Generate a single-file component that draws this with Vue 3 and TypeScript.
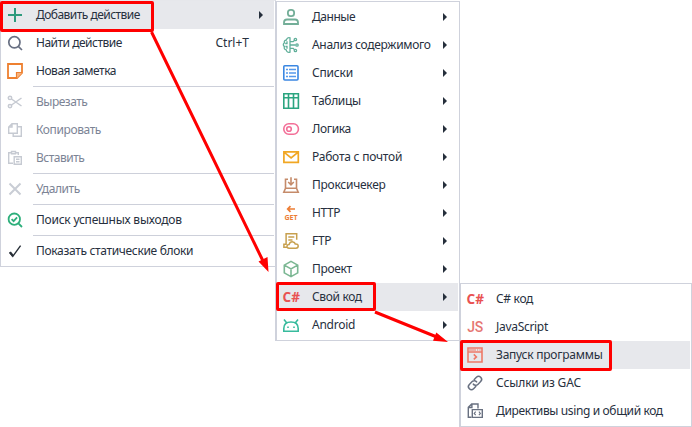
<script setup lang="ts">
interface Item {
  label: string
  icon: string
  tracking: number
  hint?: string
  disabled?: boolean
  active?: boolean
  arrow?: boolean
  divided?: boolean
}
interface Menu {
  name: string
  items: Item[]
}

// Icon bodies on an 18x18 grid
const icons: Record<string, string> = {
  plus: '<path d="M9 2v14M2 9h14" stroke="#2d9b7d" stroke-width="2"/>',
  search: '<g stroke="#687083" stroke-width="1.7"><circle cx="8.4" cy="8.3" r="5.6"/><path d="M12.3 12.4L16 16"/></g>',
  note: '<g stroke="#ee8030" stroke-width="1.8"><path d="M2 2h14v9l-5 5H2z"/><path d="M10.8 16v-5H16" /></g><path d="M11 11h5l-5 5z" fill="#f6b27d"/>',
  cut: '<g stroke="#c6cad2" stroke-width="1.5"><circle cx="4" cy="4.9" r="1.7"/><circle cx="4" cy="13.1" r="1.7"/><path d="M5.5 6L15.5 13M5.5 12L15.5 5"/></g>',
  copy: '<g stroke="#c6cad2" stroke-width="1.4"><path d="M6 2.7h5.3v9.6H2.7V6L6 2.7zM6 2.7V6H2.7"/><path d="M11.3 5.7h4v9.6H7.2v-3"/></g>',
  paste: '<g stroke="#c6cad2" stroke-width="1.4"><path d="M7 14.3H2.7V3.7H5M10 3.7h2.3V6M5.5 2.5h4v2.3h-4z"/><path d="M8.2 7.7h7.1v7.6H8.2zM10 10.2h3.5M10 12.8h3.5"/></g>',
  remove: '<path d="M3.5 3.5l11 11M14.5 3.5l-11 11" stroke="#c9cdd5" stroke-width="2"/>',
  found: '<g stroke="#2daf7b" stroke-width="1.8"><circle cx="8.3" cy="8.2" r="5.7"/><path d="M12.4 12.4L16 16M5.6 8.1l2 2 3.5-3.7"/></g>',
  check: '<path d="M3.6 10.2l3.2 4.1L14.6 3.6" stroke="#282f38" stroke-width="1.4"/><path d="M4 10.2l3 3.8" stroke="#282f38" stroke-width="2.2"/>',
  person: '<g stroke="#73ae98" stroke-width="1.8"><rect x="5.9" y="1.8" width="6.2" height="6.4" rx="2.7"/><path d="M2 16v-1.5q0-3 3-3h8q3 0 3 3V16z"/></g>',
  brain: '<g stroke="#60af9a" stroke-width="1.3"><path d="M8 1.8v14.4Q5 17 4.2 13.8Q1.6 13.2 2.4 10.6Q.2 9 2.4 6.8Q1.8 4.4 4.4 4Q5.2 1 8 1.8zM5 5.3v2.2H3.2M5 12.7v-2.2H3.4M8 5.6h3.2l1.2-1.2M8 9h5.4M8 12.4h3.2l1.2 1.2"/><circle cx="13.4" cy="3.5" r="1.2"/><circle cx="15" cy="9" r="1.2"/><circle cx="13.4" cy="14.5" r="1.2"/></g>',
  list: '<rect x="1.8" y="1.8" width="14.2" height="14.2" rx="1" stroke="#3b87e2" stroke-width="1.6"/><path d="M4 5.5h2M4 9h2M4 12.5h2M7 5.5h7M7 9h7M7 12.5h7" stroke="#5599ec" stroke-width="1.3"/>',
  table: '<path d="M1.8 1.8h14.6v14.4H1.8zM1.8 5.8h14.6M6.5 2v14M11.5 2v14" stroke="#2ba580" stroke-width="1.6"/>',
  toggle: '<g stroke="#f36f98" stroke-width="1.6"><rect x="1.8" y="3.8" width="14.6" height="10.4" rx="5"/><circle cx="7" cy="9" r="2.3"/></g>',
  mail: '<path d="M1.9 3.8h14.4v10.6H1.9zM2.3 4.3L9.1 10l6.8-5.7" stroke="#f1a723" stroke-width="1.7"/>',
  proxy: '<g stroke="#c58b6a" stroke-width="1.6"><path d="M6 3.3H3.5v8.9h11V3.3H12M3.5 12.2l-1.7 4h14.4l-1.7-4M9 1.2v7.4M6.2 6L9 8.8 11.8 6"/></g>',
  get: '<path d="M13 5H6M8.5 2.2L5.7 5l2.8 2.8" stroke="#ed7e35" stroke-width="1.7"/><text class="glyph get" x="9" y="16.2">GET</text>',
  ftp: '<g stroke="#c7a04e" stroke-width="1.5"><path d="M5 15.3H1.9v-3h2.2V1.8h10.6v6M6.3 5h6M6.3 8h4.2"/><path d="M7.1 16.2q-2.6-.3-2-2.5.4-1.3 2-1.2 1-3 3.8-2.6 2 .3 2.3 2.1 3-.2 3 2.1 0 2.1-2.3 2.1z"/></g>',
  cube: '<path d="M9 1.4l6.7 3.7v7.8L9 16.6l-6.7-3.7V5.1zM2.3 5.1L9 8.9l6.7-3.8M9 8.9v7.7" stroke="#7bb793" stroke-width="1.6"/>',
  csharp: '<text class="glyph sharp" x="9.2" y="13.8">C#</text>',
  js: '<text class="glyph js" x="9" y="14.2">JS</text>',
  android: '<path d="M1.8 15.2V12.5q0-6.5 7.2-6.5t7.2 6.5v2.7zM4.8 7L2 3.5M13.2 7L16 3.5" stroke="#38bb9d" stroke-width="1.6"/><path d="M5.2 10.5h1.6v1.6H5.2zM11.2 10.5h1.6v1.6h-1.6z" fill="#38bb9d"/>',
  run: '<path d="M2 2h14v14H2zM2 6h14M7.8 8.4l2.6 2.5-2.6 2.5" stroke="#ee7867" stroke-width="1.6"/><path d="M3 4h7M11 4h1.2M13.4 4h1.2" stroke="#ee7867" stroke-width="1"/>',
  link: '<g stroke="#687080" stroke-width="1.5" transform="rotate(-45 9 9)"><path d="M7.7 12H4a3 3 0 0 1 0-6h4a3 3 0 0 1 2.8 4M10.3 6H14a3 3 0 0 1 0 6h-4a3 3 0 0 1-2.8-4"/></g>',
  directive: '<g stroke="#687080" stroke-width="1.4"><path d="M5.5 15.3H2.3V5.4L5.7 2H12v4.5M5.9 2v3.5H2.3"/><path d="M6.3 7.6h10v7.8h-10z"/><path d="M9.7 9.7L8.2 11.4l1.5 1.7M12.9 9.7l1.5 1.7-1.5 1.7" stroke-width="1.1"/></g>',
}

const menus: Menu[] = [
  {
    name: 'main',
    items: [
      { label: 'Добавить действие', icon: 'plus', tracking: -0.53, active: true, arrow: true },
      { label: 'Найти действие', icon: 'search', tracking: -0.5, hint: 'Ctrl+T' },
      { label: 'Новая заметка', icon: 'note', tracking: -0.47 },
      { label: 'Вырезать', icon: 'cut', tracking: -0.5, disabled: true, divided: true },
      { label: 'Копировать', icon: 'copy', tracking: -0.4, disabled: true },
      { label: 'Вставить', icon: 'paste', tracking: -0.5, disabled: true },
      { label: 'Удалить', icon: 'remove', tracking: -0.42, disabled: true, divided: true },
      { label: 'Поиск успешных выходов', icon: 'found', tracking: -0.23, divided: true },
      { label: 'Показать статические блоки', icon: 'check', tracking: -0.33, divided: true },
    ],
  },
  {
    name: 'actions',
    items: [
      { label: 'Данные', icon: 'person', tracking: -0.45, arrow: true },
      { label: 'Анализ содержимого', icon: 'brain', tracking: -0.3, arrow: true },
      { label: 'Списки', icon: 'list', tracking: -0.2, arrow: true },
      { label: 'Таблицы', icon: 'table', tracking: -0.3, arrow: true },
      { label: 'Логика', icon: 'toggle', tracking: -0.35, arrow: true },
      { label: 'Работа с почтой', icon: 'mail', tracking: -0.23, arrow: true },
      { label: 'Проксичекер', icon: 'proxy', tracking: -0.26, arrow: true },
      { label: 'HTTP', icon: 'get', tracking: -0.4, arrow: true },
      { label: 'FTP', icon: 'ftp', tracking: -0.3, arrow: true },
      { label: 'Проект', icon: 'cube', tracking: -0.35, arrow: true },
      { label: 'Свой код', icon: 'csharp', tracking: -0.35, active: true, arrow: true },
      { label: 'Android', icon: 'android', tracking: -0.25, arrow: true },
    ],
  },
  {
    name: 'code',
    items: [
      { label: 'C# код', icon: 'csharp', tracking: -0.3 },
      { label: 'JavaScript', icon: 'js', tracking: -0.3 },
      { label: 'Запуск программы', icon: 'run', tracking: -0.25, active: true },
      { label: 'Ссылки из GAC', icon: 'link', tracking: -0.15 },
      { label: 'Директивы using и общий код', icon: 'directive', tracking: -0.37 },
    ],
  },
]
</script>

<template>
  <main class="stage">
    <section v-for="menu in menus" :key="menu.name" class="menu" :class="menu.name" role="menu">
      <template v-for="item in menu.items" :key="item.label">
        <div v-if="item.divided" class="divider"></div>
        <div class="row" :class="{ active: item.active, disabled: item.disabled }" role="menuitem">
          <svg class="icon" viewBox="0 0 18 18" v-html="icons[item.icon]"></svg>
          <span class="label" :style="{ letterSpacing: item.tracking + 'px' }">{{ item.label }}</span>
          <span v-if="item.hint" class="hint">{{ item.hint }}</span>
          <svg v-if="item.arrow" class="caret" viewBox="0 0 4 8"><path d="M0 0l4 4-4 4z" /></svg>
        </div>
      </template>
    </section>
    <svg class="marks" viewBox="0 0 692 427">
      <g class="frames">
        <rect x="1.5" y="2.5" width="151" height="28" rx=".5" />
        <rect x="277.5" y="283.5" width="97" height="26" rx=".5" />
        <rect x="461.5" y="341.5" width="149" height="28" rx=".5" />
        <path d="M151.5 32L264 263M375 312L438 337.5" />
      </g>
      <path class="heads" d="M268.5 272L258.5 261.5L267.5 257zM448 342L433 340.8L436.3 332.5z" />
    </svg>
  </main>
</template>

<style>
body {
  margin: 0;
  background: #fff;
}
.icon .glyph {
  font-family: "Open Sans", "Noto Sans", sans-serif;
  text-anchor: middle;
  stroke: none;
}
.icon .sharp {
  font-size: 13.6px;
  font-weight: 700;
  fill: #e95252;
}
.icon .js {
  font-family: Roboto, "Liberation Sans", sans-serif;
  font-size: 14px;
  font-weight: 500;
  letter-spacing: -0.3px;
  fill: #e67773;
}
.icon .get {
  font-size: 7px;
  font-weight: 700;
  fill: #ed7e35;
}
</style>

<style scoped>
.stage {
  position: relative;
  display: grid;
  grid-template-columns: 275px 184px 233px;
  align-items: start;
  width: 692px;
  height: 427px;
  overflow: hidden;
  font: 12px/28px "Noto Sans", "Open Sans", sans-serif;
  color: #27303e;
}
.menu {
  box-sizing: border-box;
  border: 1px solid #cfd2dc;
  background: #fff;
}
.main {
  border-top-color: #e6e7eb;
  width: 276px;
  padding: 0 1px 1px 0;
}
.actions {
  margin-top: 1px;
  width: 185px;
  border-left-width: 2px;
  padding: 1px 1px 1px 0;
}
.code {
  margin-top: 283px;
  border-left-width: 2px;
  padding: 1px 1px 1px 0;
}
.row {
  display: flex;
  align-items: center;
  height: 28px;
  padding-left: 5px;
}
.active {
  background: #e7e8ec;
}
.disabled {
  color: #7c8495;
}
.icon {
  flex: none;
  width: 18px;
  height: 18px;
  fill: none;
  overflow: visible;
}
.label {
  margin-left: 12px;
  white-space: nowrap;
}
.hint {
  margin-left: auto;
  margin-right: 25px;
}
.caret {
  flex: none;
  width: 4px;
  height: 8px;
  margin-left: auto;
  margin-right: 11px;
  fill: #252e3b;
}
.divider {
  height: 1px;
  margin: 1px 0 1px 32px;
  background: #cdd0da;
}
.marks {
  position: absolute;
  inset: 0;
  width: 692px;
  height: 427px;
  pointer-events: none;
}
.frames {
  fill: none;
  stroke: #f00;
  stroke-width: 3;
}
.heads {
  fill: #f00;
}
</style>
